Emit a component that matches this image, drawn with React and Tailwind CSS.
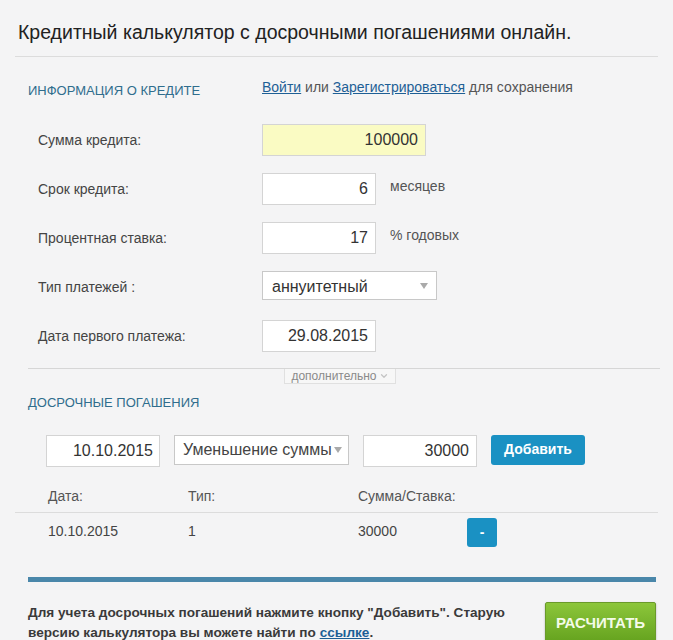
import { ChevronDown } from "lucide-react";

const Field = ({ label, children }) => {
  return (
    <div className="flex items-start h-[32px]">
      <div className="w-[247px] pl-[23px] leading-[32px] text-[14px] text-[#444]">{label}</div>
      {children}
    </div>
  );
};

const Input = ({ value, w, yellow }) => {
  const bg = yellow ? "bg-[#fafbc3]" : "bg-white";
  return (
    <div
      className={`${w} ${bg} h-[32px] border border-[#d4d4d4] text-right pr-[7px] leading-[30px] text-[16px] text-[#333]`}
    >
      {value}
    </div>
  );
};

const Caret = () => (
  <span className="inline-block w-0 h-0 border-l-[4px] border-r-[4px] border-t-[6px] border-l-transparent border-r-transparent border-t-[#aaa]" />
);

const App = () => {
  return (
    <div
      className="w-[673px] h-[640px] overflow-hidden bg-[#f4f4f5] px-[15px]"
      style={{ fontFamily: '"Liberation Sans", Arial, sans-serif' }}
    >
      <h1 className="pt-[20px] pl-[3px] text-[19.5px] leading-[24px] text-[#222]">
        Кредитный калькулятор с досрочными погашениями онлайн.
      </h1>
      <div className="mt-[12px] border-t border-[#dcdcdc]" />

      <div className="flex mt-[20px] h-[24px]">
        <div className="w-[247px] pl-[13px] pt-[4px] text-[13px] text-[#2f6d8d]">ИНФОРМАЦИЯ О КРЕДИТЕ</div>
        <div className="text-[14px] text-[#555]">
          <a className="underline text-[#1e5f95]">Войти</a> или{" "}
          <a className="underline text-[#1e5f95]">Зарегистрироваться</a> для сохранения
        </div>
      </div>

      <div className="mt-[23px] flex flex-col gap-[17px]">
        <Field label="Сумма кредита:">
          <Input value="100000" w="w-[164px]" yellow />
        </Field>
        <Field label="Срок кредита:">
          <Input value="6" w="w-[114px]" />
          <span className="ml-[14px] text-[14px] text-[#555] leading-[26px]">месяцев</span>
        </Field>
        <Field label="Процентная ставка:">
          <Input value="17" w="w-[114px]" />
          <span className="ml-[14px] text-[14px] text-[#555] leading-[26px]">% годовых</span>
        </Field>
        <Field label="Тип платежей :">
          <div className="w-[175px] h-[29px] bg-white border border-[#c8c8c8] flex items-center justify-between pl-[9px] pr-[8px] text-[16px] text-[#333]">
            <span className="pt-[2px]">аннуитетный</span>
            <Caret />
          </div>
        </Field>
        <Field label="Дата первого платежа:">
          <Input value="29.08.2015" w="w-[114px]" />
        </Field>
      </div>

      <div className="mt-[16px] ml-[13px] mr-[-2px] border-t border-[#d6d6d6] relative">
        <div className="absolute left-[256px] top-0 w-[112px] h-[15px] border border-t-0 border-[#e0e0e0] bg-[#f7f7f7] flex items-center justify-center gap-[2px] text-[12px] text-[#8a8a8a]">
          дополнительно
          <ChevronDown size={10} strokeWidth={3} className="text-[#c4c4c4]" />
        </div>
      </div>

      <div className="mt-[24px] pl-[13px] text-[13px] text-[#2f6d8d]">ДОСРОЧНЫЕ ПОГАШЕНИЯ</div>

      <div className="mt-[22px] ml-[31px] flex items-start gap-[14px]">
        <div className="w-[114px] h-[32px] bg-white border border-[#d4d4d4] text-right pr-[6px] leading-[30px] text-[16px] text-[#333]">
          10.10.2015
        </div>
        <div className="w-[175px] h-[30px] bg-white border border-[#c8c8c8] flex items-center justify-between pl-[8px] pr-[6px] text-[16px] text-[#444]">
          <span>Уменьшение суммы</span>
          <Caret />
        </div>
        <div className="w-[114px] h-[32px] bg-white border border-[#d4d4d4] text-right pr-[7px] leading-[30px] text-[16px] text-[#333]">
          30000
        </div>
        <button className="w-[94px] h-[30px] rounded-[3px] bg-[#1a91c3] text-white font-bold text-[14px]">
          Добавить
        </button>
      </div>

      <div className="mt-[18px] flex text-[14px] text-[#555] h-[24px] items-center">
        <span className="w-[140px] pl-[33px]">Дата:</span>
        <span className="w-[200px] pl-[33px]">Тип:</span>
        <span className="pl-[3px]">Сумма/Ставка:</span>
      </div>
      <div className="mt-[3px] border-t border-[#dcdcdc]" />
      <div className="flex text-[14px] text-[#444] h-[36px] items-start">
        <span className="w-[140px] pl-[33px] pt-[8px]">10.10.2015</span>
        <span className="w-[200px] pl-[33px] pt-[8px]">1</span>
        <span className="w-[112px] pl-[3px] pt-[8px]">30000</span>
        <button className="mt-[5px] w-[30px] h-[29px] rounded-[3px] bg-[#1a91c3] text-white font-bold text-[14px]">
          -
        </button>
      </div>

      <div className="mt-[28px] ml-[13px] mr-[2px] h-[5px] bg-[#4a87aa]" />

      <div className="mt-[20px] flex justify-between pl-[13px] pr-[2px]">
        <div className="w-[500px] pt-[1px] text-[13.6px] leading-[20px] font-bold text-[#3a3a3a]">
          <div>Для учета досрочных погашений нажмите кнопку "Добавить". Старую</div>
          <div>
            версию калькулятора вы можете найти по <a className="underline text-[#1e5f95]">ссылке</a>.
          </div>
        </div>
        <button className="w-[111px] h-[44px] rounded-[2px] border border-[#6a9a2a] bg-gradient-to-b from-[#8cc63a] to-[#62a01c] text-[#f4fbe8] text-[15px] font-bold shadow-[0_1px_2px_rgba(0,0,0,0.3)]">
          РАСЧИТАТЬ
        </button>
      </div>
    </div>
  );
};

export default App;
